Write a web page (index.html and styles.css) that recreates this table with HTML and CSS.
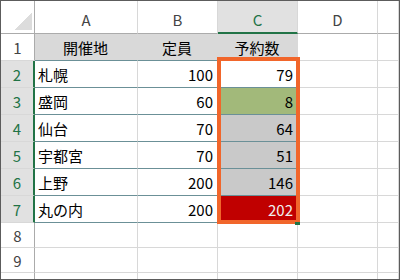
FILE: index.html
```html
<!DOCTYPE html>
<html lang="ja">
  <head>
    <meta charset="UTF-8" />
    <meta name="viewport" content="width=device-width, initial-scale=1.0" />
    <title>予約数</title>
    <link rel="stylesheet" href="styles.css">
  </head>
  <body>
    <div class="sheet">
      <div class="grid">
        <!-- column headers -->
        <div class="corner"><span class="tri"></span></div>
        <div class="colhead">A</div>
        <div class="colhead">B</div>
        <div class="colhead sel">C</div>
        <div class="colhead">D</div>
        <div class="colhead"></div>

        <!-- row 1 : titles -->
        <div class="rowhead">1</div>
        <div class="cell tbl title">開催地</div>
        <div class="cell tbl title">定員</div>
        <div class="cell tbl title">予約数</div>
        <div class="cell"></div>
        <div class="cell"></div>

        <div class="rowhead sel">2</div>
        <div class="cell tbl">札幌</div>
        <div class="cell tbl num">100</div>
        <div class="cell tbl num">79</div>
        <div class="cell"></div>
        <div class="cell"></div>

        <div class="rowhead sel">3</div>
        <div class="cell tbl">盛岡</div>
        <div class="cell tbl num">60</div>
        <div class="cell tbl num good">8</div>
        <div class="cell"></div>
        <div class="cell"></div>

        <div class="rowhead sel">4</div>
        <div class="cell tbl">仙台</div>
        <div class="cell tbl num">70</div>
        <div class="cell tbl num mid">64</div>
        <div class="cell"></div>
        <div class="cell"></div>

        <div class="rowhead sel">5</div>
        <div class="cell tbl">宇都宮</div>
        <div class="cell tbl num">70</div>
        <div class="cell tbl num mid">51</div>
        <div class="cell"></div>
        <div class="cell"></div>

        <div class="rowhead sel">6</div>
        <div class="cell tbl">上野</div>
        <div class="cell tbl num">200</div>
        <div class="cell tbl num mid">146</div>
        <div class="cell"></div>
        <div class="cell"></div>

        <div class="rowhead sel">7</div>
        <div class="cell tbl">丸の内</div>
        <div class="cell tbl num">200</div>
        <div class="cell tbl num over">202</div>
        <div class="cell"></div>
        <div class="cell"></div>

        <div class="rowhead">8</div>
        <div class="cell"></div>
        <div class="cell"></div>
        <div class="cell"></div>
        <div class="cell"></div>
        <div class="cell"></div>

        <div class="rowhead">9</div>
        <div class="cell"></div>
        <div class="cell"></div>
        <div class="cell"></div>
        <div class="cell"></div>
        <div class="cell"></div>

        <div class="rowhead">10</div>
        <div class="cell"></div>
        <div class="cell"></div>
        <div class="cell"></div>
        <div class="cell"></div>
        <div class="cell"></div>
      </div>

      <!-- highlight around C2:C7 -->
      <div class="pick"></div>
      <div class="handle"></div>
    </div>
  </body>
</html>
```

FILE: styles.css
```css
* {
  margin: 0px;
  box-sizing: border-box;
}

body {
  font-family: "Noto Sans CJK JP", "Noto Sans", sans-serif;
  background-color: #fff;
}

.sheet {
  position: relative;
  width: 400px;
  height: 280px;
  border: 1px solid #5c5c5c;
  overflow: hidden;
}

.grid {
  display: grid;
  grid-template-columns: 34px 103px 80px 80px 80px 1fr;
  grid-template-rows: 33px repeat(7, 27px) repeat(3, 25px);
  font-size: 15px;
  line-height: 1;
}

.corner {
  position: relative;
  border-right: 1px solid #ababab;
  border-bottom: 1px solid #ababab;
}

.corner .tri {
  position: absolute;
  right: 2px;
  bottom: 3px;
  width: 18px;
  height: 18px;
  background: linear-gradient(to bottom right, transparent 50%, #dcdcdc 50%);
}

.colhead {
  display: flex;
  align-items: center;
  justify-content: center;
  padding-top: 5px;
  color: #444;
  border-right: 1px solid #d8d8d8;
  border-bottom: 1px solid #ababab;
}

.colhead.sel {
  background-color: #e1e1e1;
  color: #217346;
  border-bottom: 2px solid #217346;
}

.rowhead {
  display: flex;
  align-items: center;
  justify-content: center;
  color: #444;
  border-right: 1px solid #ababab;
  border-bottom: 1px solid #d8d8d8;
}

.rowhead.sel {
  background-color: #e1e1e1;
  color: #217346;
  border-right: 2px solid #217346;
}

.cell {
  display: flex;
  align-items: center;
  padding: 0px 4px 0px 3px;
  color: #000;
  border-right: 1px solid #d8d8d8;
  border-bottom: 1px solid #d8d8d8;
}

.cell.tbl {
  border-bottom-color: #6b9097;
}

.cell.title {
  justify-content: center;
  background-color: #d9d9d9;
  border-right-color: #d9d9d9;
}

.cell.num {
  justify-content: flex-end;
}

.cell.good {
  background-color: #a2b97a;
  border-right-color: #a2b97a;
}

.cell.mid {
  background-color: #c9c9c9;
  border-right-color: #c9c9c9;
}

.cell.over {
  background-color: #c00000;
  border-right-color: #c00000;
  color: #f0f0f0;
}

.pick {
  position: absolute;
  left: 216px;
  top: 56px;
  width: 83px;
  height: 167px;
  border: 4px solid #f1662b;
}

.handle {
  position: absolute;
  left: 294px;
  top: 221px;
  width: 5px;
  height: 3px;
  background-color: #217346;
}
```
